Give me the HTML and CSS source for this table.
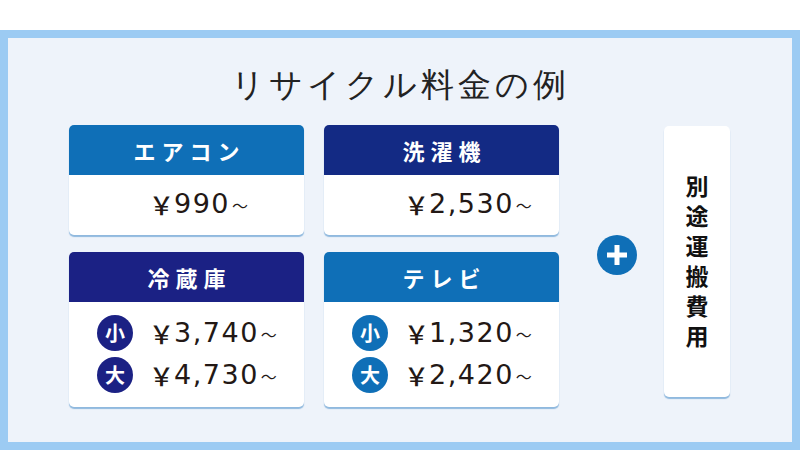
FILE: index.html
```html
<!DOCTYPE html>
<html lang="ja">
<head>
<meta charset="utf-8">
<link rel="stylesheet" href="styles.css">
</head>
<body>
<div class="top"></div>
<section class="frame">
  <h1 class="title">リサイクル料金の例</h1>
  <div class="content">
    <div class="cards">
      <div class="card">
        <div class="card-head light">エアコン</div>
        <div class="card-body single"><span class="price"><span class="yen">￥</span>990<span class="tilde">～</span></span></div>
      </div>
      <div class="card">
        <div class="card-head navy">洗濯機</div>
        <div class="card-body single"><span class="price"><span class="yen">￥</span>2,530<span class="tilde">～</span></span></div>
      </div>
      <div class="card">
        <div class="card-head navy2">冷蔵庫</div>
        <div class="card-body double">
          <div class="row"><span class="badge navy2">小</span><span class="price"><span class="yen">￥</span>3,740<span class="tilde">～</span></span></div>
          <div class="row"><span class="badge navy2">大</span><span class="price"><span class="yen">￥</span>4,730<span class="tilde">～</span></span></div>
        </div>
      </div>
      <div class="card">
        <div class="card-head light">テレビ</div>
        <div class="card-body double">
          <div class="row"><span class="badge light">小</span><span class="price"><span class="yen">￥</span>1,320<span class="tilde">～</span></span></div>
          <div class="row"><span class="badge light">大</span><span class="price"><span class="yen">￥</span>2,420<span class="tilde">～</span></span></div>
        </div>
      </div>
    </div>
    <div class="plus">
      <svg width="40" height="40" viewBox="0 0 40 40"><circle cx="20" cy="20" r="20" fill="#0f6fb7"/><rect x="10" y="17.5" width="20" height="5" fill="#fff"/><rect x="17.5" y="10" width="5" height="20" fill="#fff"/></svg>
    </div>
    <div class="side"><span class="side-text">別途運搬費用</span></div>
  </div>
</section>
</body>
</html>
```
FILE: styles.css
```css
* { box-sizing: border-box; }
html, body { margin: 0; padding: 0; background: #fff; }
body { width: 800px; height: 450px; overflow: hidden; font-family: "Noto Sans CJK JP", "Noto Sans", sans-serif; }
.top { height: 30px; }
.frame {
  height: 420px;
  border: 8px solid #9ccbf3;
  background: #eef3fa;
  padding-top: 22px;
}
.title {
  margin: 0;
  text-align: center;
  font-family: serif;
  font-weight: 400;
  font-size: 33px;
  line-height: 50px;
  letter-spacing: 4px;
  color: #222;
}
.content {
  display: flex;
  align-items: flex-start;
  margin-top: 15px;
  padding-left: 61px;
}
.cards {
  display: grid;
  grid-template-columns: 235px 235px;
  grid-template-rows: 110px 155px;
  column-gap: 20px;
  row-gap: 17px;
}
.card {
  background: #fff;
  border-radius: 5px;
  overflow: hidden;
  box-shadow: 0 2px 1px rgba(120, 170, 215, 0.8);
  display: flex;
  flex-direction: column;
}
.card-head {
  height: 50px;
  display: flex;
  align-items: center;
  justify-content: center;
  color: #fff;
  font-weight: 700;
  font-size: 22px;
  letter-spacing: 6px;
  padding-left: 6px;
}
.light { background: #0f6fb7; }
.navy { background: #132a84; }
.navy2 { background: #1b2184; }
.card-body { flex: 1; display: flex; flex-direction: column; justify-content: center; }
.single { padding-left: 80px; padding-bottom: 2px; }
.double { padding-left: 28px; gap: 7px; padding-bottom: 2px; }
.row { display: flex; align-items: center; height: 35px; }
.badge {
  width: 36px; height: 36px; border-radius: 50%;
  color: #fff; font-weight: 700; font-size: 20px;
  display: flex; align-items: center; justify-content: center;
  margin-right: 16px;
}
.price {
  font-family: "DejaVu Sans", "Noto Sans CJK JP", sans-serif;
  font-size: 27px;
  line-height: 30px;
  color: #231815;
  letter-spacing: 1.5px;
  font-weight: 400;
  display: flex;
  align-items: center;
}
.yen { font-family: "Noto Sans CJK JP", sans-serif; font-size: 25px; letter-spacing: 0; font-weight: 500; }
.tilde { font-family: "Noto Sans CJK JP", sans-serif; font-size: 16px; letter-spacing: 0; margin-left: 2px; margin-top: 2px; }
.plus { margin-left: 38px; margin-top: 110px; width: 40px; height: 40px; }
.plus svg { display: block; }
.side {
  margin-left: 27px;
  margin-top: 1px;
  width: 66px;
  height: 271px;
  background: #fff;
  border-radius: 5px;
  box-shadow: 0 2px 1px rgba(120, 170, 215, 0.8);
  display: flex;
  align-items: center;
  justify-content: center;
}
.side-text {
  writing-mode: vertical-rl;
  font-size: 23px;
  font-weight: 700;
  letter-spacing: 7px;
  color: #111;
  margin-top: 7px;
}
```
